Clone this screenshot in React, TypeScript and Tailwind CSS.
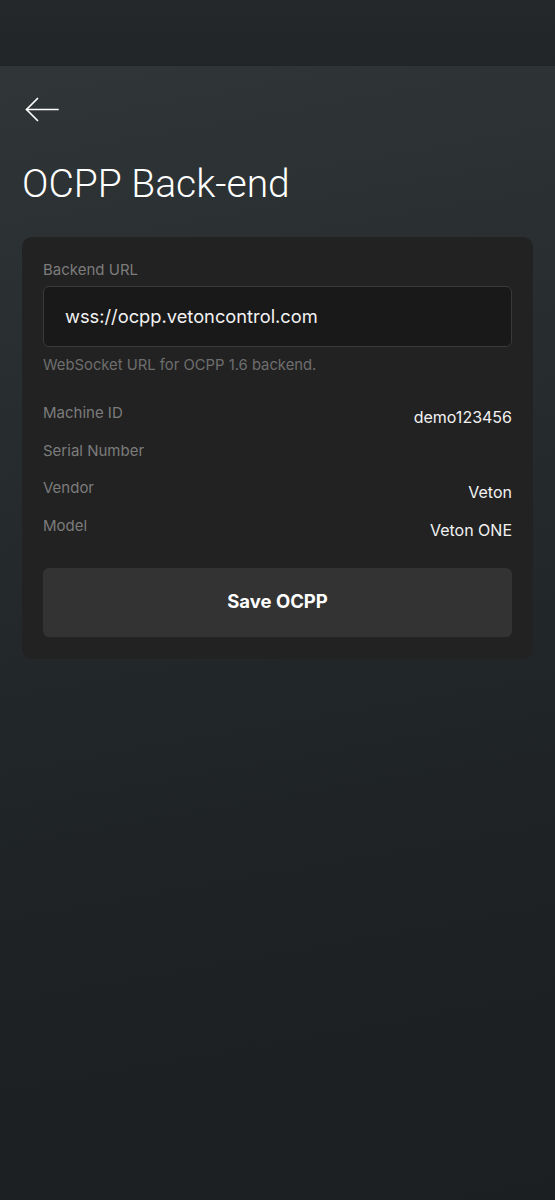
import React from "react";

function BackArrow() {
  return (
    <svg width="36" height="28" viewBox="0 0 36 28" fill="none" stroke="white" strokeWidth="1.7" strokeLinecap="round" strokeLinejoin="round">
      <path d="M34 13.5H2.5" />
      <path d="M13.5 2.5L2.5 13.5L13.5 24.5" />
    </svg>
  );
}

function Row({ label, value }: { label: string; value: string }) {
  return (
    <div className="flex justify-between items-start h-[20px]">
      <span className="text-[15px] leading-[20px] text-[#7c7c7c]">{label}</span>
      <span className="text-[16px] leading-[20px] mt-[4px] text-[#f2f2f2]">{value}</span>
    </div>
  );
}

export default function App() {
  return (
    <div className="w-[555px] h-[1200px] flex flex-col bg-[#22272a]" style={{ fontFamily: "Inter, 'Noto Sans', sans-serif" }}>
      <div className="h-[66px] bg-[linear-gradient(180deg,#24282b,#212527)]" />
      <div className="flex-1 flex flex-col bg-[linear-gradient(170deg,#303537_0%,#272c2e_30%,#1e2225_70%,#1c1f22_100%)]">
        <div className="pl-[24px] pt-[30px]">
          <BackArrow />
        </div>
        <h1
          className="pl-[22px] mt-[36px] text-[39px] leading-[48px] text-white font-light"
          style={{ fontFamily: "Roboto, sans-serif" }}
        >
          OCPP Back-end
        </h1>
        <div className="mx-[22px] mt-[29px] rounded-[10px] bg-[#222222] px-[21px] pt-[23px] pb-[22px] flex flex-col">
          <div className="text-[15px] leading-[20px] text-[#7c7c7c]">Backend URL</div>
          <div className="mt-[6px] h-[61px] rounded-[6px] bg-[#191919] border border-[#3a3a3a] flex items-center px-[21px]">
            <span className="text-[18.3px] text-[#f2f2f2]">wss://ocpp.vetoncontrol.com</span>
          </div>
          <div className="mt-[8px] text-[14.8px] leading-[20px] text-[#6e6e6e]">WebSocket URL for OCPP 1.6 backend.</div>
          <div className="mt-[28px] flex flex-col gap-[17.5px]">
            <Row label="Machine ID" value="demo123456" />
            <Row label="Serial Number" value="" />
            <Row label="Vendor" value="Veton" />
            <Row label="Model" value="Veton ONE" />
          </div>
          <button className="mt-[32px] h-[69px] rounded-[6px] bg-[#333333] flex items-center justify-center text-[18.5px] font-bold text-white">
            Save OCPP
          </button>
        </div>
      </div>
    </div>
  );
}
